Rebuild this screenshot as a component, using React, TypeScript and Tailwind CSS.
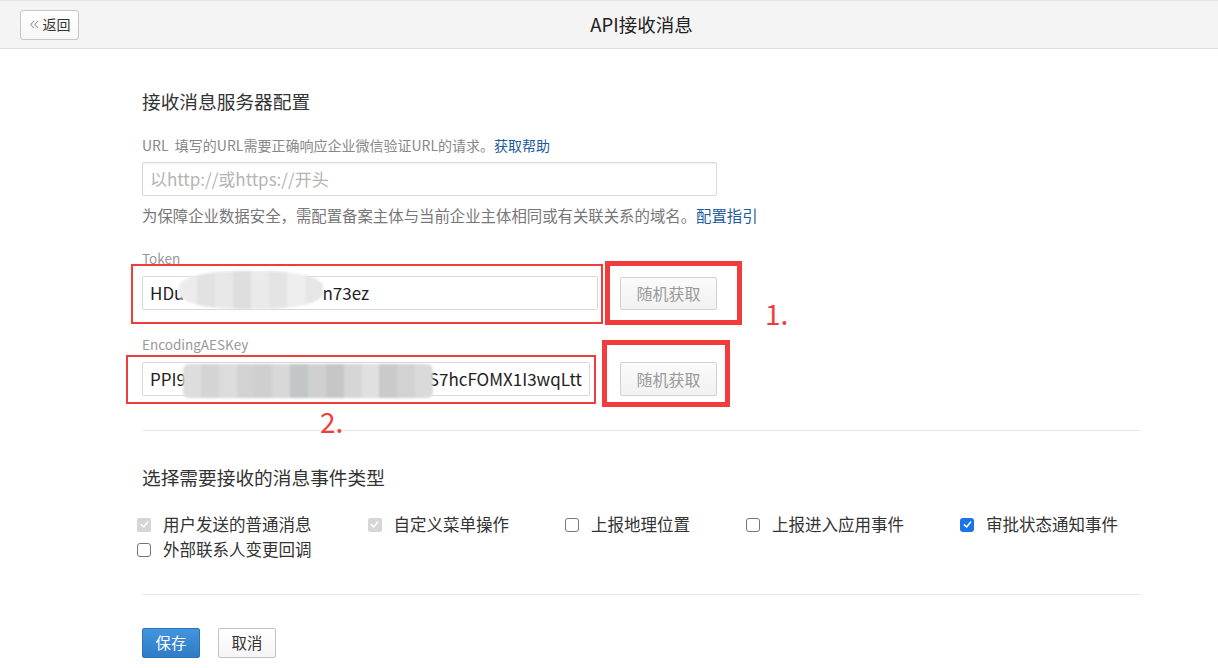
import React from 'react';

const FONT = { fontFamily: '"Noto Sans CJK SC", "Noto Sans", sans-serif' };

const tokenBlocks = ['#ececec', '#e2e2e2', '#e8e8e8', '#dedede', '#eaeaea', '#e4e4e4', '#eeeeee', '#e6e6e6'];
const aesBlocks = [
  '#dddddd', '#d4d4d4', '#dcdcdc', '#d2d2d2', '#cfcfcf', '#d8d8d8', '#c2c6c6', '#d0d0d0',
  '#c6c6c6', '#d6d6d6', '#e0e0e0', '#cacaca', '#d2d2d2', '#dadada',
];

function Mosaic({ colors, className }: { colors: string[]; className: string }) {
  return (
    <div className={`absolute flex overflow-hidden blur-[1px] ${className}`}>
      {colors.map((c, i) => (
        <div key={i} className="h-full flex-1" style={{ backgroundColor: c }} />
      ))}
    </div>
  );
}

function Check({ color }: { color: string }) {
  return (
    <svg viewBox="0 0 14 14" className="h-[11px] w-[11px]">
      <path d="M3 7.4 L5.9 10.2 L11 3.9" fill="none" stroke={color} strokeWidth="2" strokeLinecap="round" strokeLinejoin="round" />
    </svg>
  );
}

type Box = 'disabled' | 'off' | 'on';

function CheckItem({ label, state }: { label: string; state: Box }) {
  return (
    <label className="inline-flex h-[25px] items-center">
      {state === 'disabled' && (
        <span className="flex h-[14px] w-[14px] items-center justify-center rounded-[2px] bg-[#d6d6d6]">
          <Check color="#ffffff" />
        </span>
      )}
      {state === 'off' && (
        <span className="h-[14px] w-[14px] rounded-[3px] border border-[#767676] bg-white" />
      )}
      {state === 'on' && (
        <span className="flex h-[14px] w-[14px] items-center justify-center rounded-[3px] bg-[#1a73e8]">
          <Check color="#ffffff" />
        </span>
      )}
      <span className="ml-[12px] text-[16.5px] text-[#333]">{label}</span>
    </label>
  );
}

function RandomButton({ h }: { h: string }) {
  return (
    <button
      className={`w-[97px] ${h} rounded-[2px] border border-[#d2d2d2] bg-gradient-to-b from-[#fbfbfb] to-[#f1f1f1] text-[16px] text-[#9a9a9a]`}
    >
      随机获取
    </button>
  );
}

export default function App() {
  return (
    <div className="relative h-[668px] w-[1218px] overflow-hidden bg-white" style={FONT}>
      {/* header */}
      <div className="relative flex h-[49px] items-center border-b border-t border-b-[#dedede] border-t-[#e6e6e6] bg-[#f4f4f4]">
        <button className="ml-[20px] flex h-[30px] w-[59px] items-center justify-center gap-[3px] rounded-[3px] border border-[#c6c6c6] bg-gradient-to-b from-white to-[#f7f7f7] text-[14px] text-[#333]">
          <svg viewBox="0 0 12 12" className="h-[11px] w-[11px]">
            <path d="M5.5 2 L1.8 6 L5.5 10 M10 2 L6.3 6 L10 10" fill="none" stroke="#a0a0a0" strokeWidth="1.2" />
          </svg>
          <span>返回</span>
        </button>
        <div className="pointer-events-none absolute left-0 right-0 top-0 flex h-full items-center justify-center">
          <span className="ml-[65px] text-[18.5px] text-[#222]">API接收消息</span>
        </div>
      </div>

      {/* body */}
      <div className="ml-[142px] w-[998px]">
        <div className="mt-[39px] h-[26px] text-[18.7px] leading-[26px] text-[#333]">接收消息服务器配置</div>

        <div className="mt-[21px] h-[20px] text-[14px] leading-[20px] text-[#888]">
          URL&nbsp;&nbsp;填写的URL需要正确响应企业微信验证URL的请求。
          <span className="text-[#1e5a9e]">获取帮助</span>
        </div>

        <div className="mt-[7px] flex h-[34px] w-[575px] items-center rounded-[2px] border border-[#d9d9d9] px-[7px] text-[17px] text-[#b4b4b4] shadow-[inset_0_1px_1px_rgba(0,0,0,0.04)]">
          以http://或https://开头
        </div>

        <div className="mt-[8px] h-[22px] text-[15.4px] leading-[22px] text-[#777]">
          为保障企业数据安全，需配置备案主体与当前企业主体相同或有关联关系的域名。
          <span className="text-[#1e5a9e]">配置指引</span>
        </div>

        <div className="mt-[23px] h-[18px] text-[13.5px] leading-[18px] text-[#999]">Token</div>
        <div className="mt-[9px] flex items-center">
          <div className="relative flex h-[34px] w-[456px] items-center rounded-[2px] border border-[#d9d9d9] px-[7px] text-[17px] text-[#222]">
            <span>HDu</span>
            <span className="inline-block w-[138px]" />
            <span>n73ez</span>
            <Mosaic colors={tokenBlocks} className="left-[36px] top-[-6px] h-[38px] w-[144px] rounded-[40%]" />
          </div>
          <div className="ml-[22px]">
            <RandomButton h="h-[33px]" />
          </div>
        </div>

        <div className="mt-[25px] h-[18px] text-[13.5px] leading-[18px] text-[#999]">EncodingAESKey</div>
        <div className="mt-[9px] flex items-center">
          <div className="relative flex h-[34px] w-[448px] items-center rounded-[2px] border border-[#d9d9d9] px-[7px] text-[17px] text-[#222]">
            <span>PPI9</span>
            <span className="inline-block w-[247px]" />
            <span>S7hcFOMX1I3wqLtt</span>
            <Mosaic colors={aesBlocks} className="left-[40px] top-[1px] h-[34px] w-[250px] rounded-[6px]" />
          </div>
          <div className="ml-[30px]">
            <RandomButton h="h-[34px]" />
          </div>
        </div>

        <div className="mt-[34px] h-px bg-[#e8e8e8]" />

        <div className="mt-[33px] h-[26px] text-[18.7px] leading-[26px] text-[#333]">选择需要接收的消息事件类型</div>

        <div className="-ml-[5px] mt-[22px] flex flex-wrap gap-x-[56px]">
          <CheckItem label="用户发送的普通消息" state="disabled" />
          <CheckItem label="自定义菜单操作" state="disabled" />
          <CheckItem label="上报地理位置" state="off" />
          <CheckItem label="上报进入应用事件" state="off" />
          <CheckItem label="审批状态通知事件" state="on" />
          <CheckItem label="外部联系人变更回调" state="off" />
        </div>

        <div className="mt-[32px] h-px bg-[#e8e8e8]" />

        <div className="mt-[33px] flex gap-[18px]">
          <button className="h-[30px] w-[58px] rounded-[2px] border border-[#2b74bb] bg-gradient-to-b from-[#4295de] to-[#2f7cc5] text-[15.4px] text-white">
            保存
          </button>
          <button className="h-[30px] w-[58px] rounded-[2px] border border-[#c2c2c2] bg-gradient-to-b from-white to-[#f5f5f5] text-[15.4px] text-[#333]">
            取消
          </button>
        </div>
      </div>

      {/* red annotations over the screenshot */}
      <div className="pointer-events-none absolute left-[131px] top-[264px] h-[60px] w-[472px] border-2 border-[#f23c3c]" />
      <div className="pointer-events-none absolute left-[605px] top-[261px] h-[64px] w-[137px] border-[5px] border-[#f23c3c]" />
      <div className="pointer-events-none absolute left-[765px] top-[295px] text-[28px] leading-[36px] text-[#f23c3c]">1.</div>
      <div className="pointer-events-none absolute left-[126px] top-[355px] h-[49px] w-[470px] border-2 border-[#f23c3c]" />
      <div className="pointer-events-none absolute left-[602px] top-[340px] h-[67px] w-[128px] border-[5px] border-[#f23c3c]" />
      <div className="pointer-events-none absolute left-[320px] top-[403px] text-[28px] leading-[36px] text-[#f23c3c]">2.</div>
    </div>
  );
}
